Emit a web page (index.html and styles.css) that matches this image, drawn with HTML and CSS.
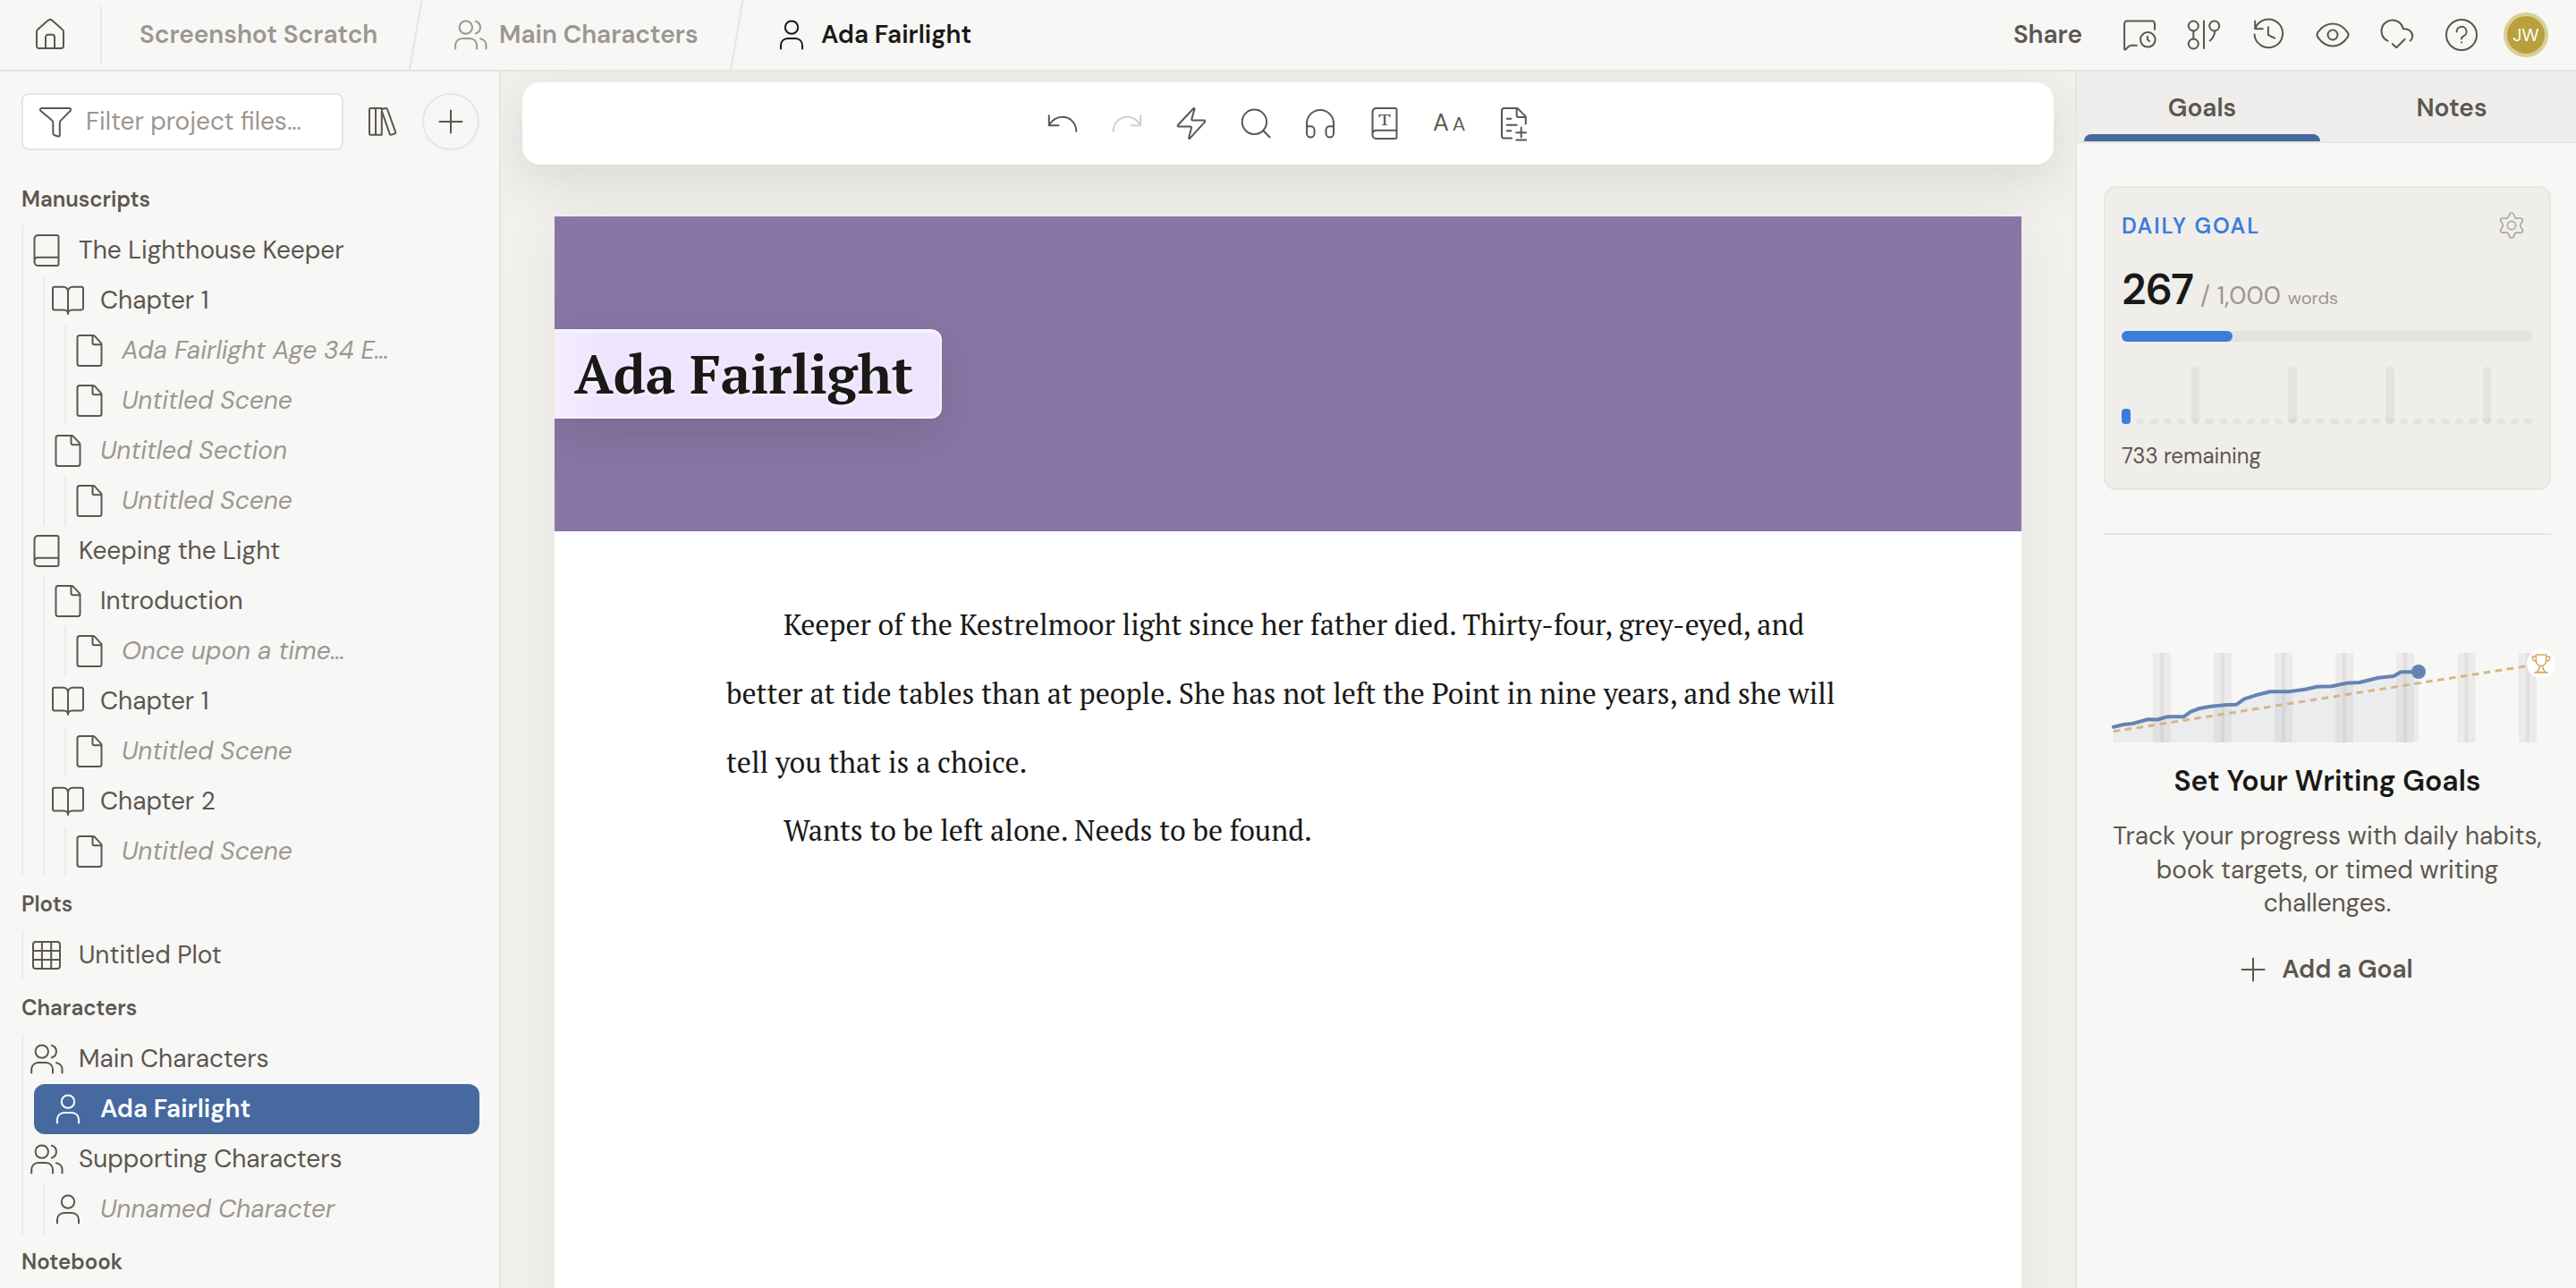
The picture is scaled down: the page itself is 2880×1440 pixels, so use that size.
FILE: index.html
```
<!DOCTYPE html>
<html lang="en">
<head>
  <meta charset="UTF-8">
  <title>Ada Fairlight - Screenshot Scratch</title>
  <link rel="stylesheet" href="styles.css">
</head>
<body>
  <!-- icon sprite, all on a 40x40 grid -->
  <svg class="sprite" aria-hidden="true">
    <symbol id="i-home" viewBox="0 0 40 40"><path d="M5 32.3V16.8a4 4 0 0 1 1.2-2.9L17.4 4.1a3.8 3.8 0 0 1 5.2 0l11.2 9.8a4 4 0 0 1 1.2 2.9v15.5a2.7 2.7 0 0 1-2.7 2.7H7.7A2.7 2.7 0 0 1 5 32.3zM15 35V22.5a2.7 2.7 0 0 1 2.7-2.7h4.6a2.7 2.7 0 0 1 2.7 2.7V35"/></symbol>
    <symbol id="i-users" viewBox="0 0 40 40"><circle cx="14.8" cy="11.6" r="7.2"/><path d="M3.2 35.5v-4a7.6 7.6 0 0 1 7.6-7.6h8.6a7.6 7.6 0 0 1 7.6 7.6v4M25.8 4.7a7.2 7.2 0 0 1 0 13.8M31 24.2a7.6 7.6 0 0 1 6.5 7.3v4"/></symbol>
    <symbol id="i-user" viewBox="0 0 40 40"><circle cx="20" cy="11.6" r="7.2"/><path d="M8 35.5v-4a7.6 7.6 0 0 1 7.6-7.6h8.8a7.6 7.6 0 0 1 7.6 7.6v4"/></symbol>
    <symbol id="i-filter" viewBox="0 0 40 40"><path d="M4.5 5h31a1.6 1.6 0 0 1 1.2 2.7L26 18.6a4 4 0 0 0-1.2 2.8v13.9a1.3 1.3 0 0 1-1.7 1.2l-4-1.3a2.6 2.6 0 0 1-1.8-2.5V21.4a4 4 0 0 0-1.2-2.8L3.3 7.7A1.6 1.6 0 0 1 4.5 5z"/></symbol>
    <symbol id="i-library" viewBox="0 0 40 40"><path d="M6.2 5h12.6v29.7H6.2A1.2 1.2 0 0 1 5 33.5V6.2A1.2 1.2 0 0 1 6.2 5zM12 5v29.7M18.8 6.3l4.3-1.3a1.5 1.5 0 0 1 1.9 1l9.2 25.6a1.5 1.5 0 0 1-1 1.9l-3.6 1.1a1.5 1.5 0 0 1-1.9-1L18.8 8"/></symbol>
    <symbol id="i-plus" viewBox="0 0 40 40"><path d="M20 7.5v25M7.5 20h25"/></symbol>
    <symbol id="i-book" viewBox="0 0 40 40"><path d="M33.5 27.7H10.3a3.8 3.8 0 0 0-3.8 3.8M6.5 33V7a4 4 0 0 1 4-4h21.3a1.7 1.7 0 0 1 1.7 1.7v30.6a1.7 1.7 0 0 1-1.7 1.7H10.5a4 4 0 0 1-4-4z"/></symbol>
    <symbol id="i-chapter" viewBox="0 0 40 40"><path d="M20 35V10a5.2 5.2 0 0 0-5.2-5.2H4.8A1.8 1.8 0 0 0 3 6.6v22a1.8 1.8 0 0 0 1.8 1.8H15.5a4.5 4.5 0 0 1 4.5 4.5 4.5 4.5 0 0 1 4.5-4.5h10.7a1.8 1.8 0 0 0 1.8-1.8v-22a1.8 1.8 0 0 0-1.8-1.8H25.2A5.2 5.2 0 0 0 20 10"/></symbol>
    <symbol id="i-doc" viewBox="0 0 40 40"><path d="M9 3h15.2a2 2 0 0 1 1.5.6l7.2 7.8a2 2 0 0 1 .6 1.4v21.7a2.5 2.5 0 0 1-2.5 2.5H9a2.5 2.5 0 0 1-2.5-2.5v-29A2.5 2.5 0 0 1 9 3zM23.5 3v8.2a2 2 0 0 0 2 2h8"/></symbol>
    <symbol id="i-grid" viewBox="0 0 40 40"><path d="M8 5h24a3 3 0 0 1 3 3v24a3 3 0 0 1-3 3H8a3 3 0 0 1-3-3V8a3 3 0 0 1 3-3zM14.9 5v30M25.2 5v30M5 15h30M5 25h30"/></symbol>
    <symbol id="i-comment" viewBox="0 0 40 40"><path d="M37 14V7.3a2.7 2.7 0 0 0-2.7-2.7H5.8a2.7 2.7 0 0 0-2.7 2.7v28.5c0 .8.7 1 1.3.5l3.2-3.1a5 5 0 0 1 3.5-1.5H17"/><circle cx="29.3" cy="25.3" r="8.3"/><path d="M29 21.8v3.3l2 1.9"/></symbol>
    <symbol id="i-branch" viewBox="0 0 40 40"><circle cx="8.3" cy="10" r="5.5"/><circle cx="8.3" cy="30" r="5.5"/><circle cx="31.7" cy="10" r="5.5"/><path d="M8.3 15.5v9M20 4.5v30.5M32.2 15.5c-.2 5-2.2 8.3-5.5 11"/></symbol>
    <symbol id="i-history" viewBox="0 0 40 40"><path d="M5.2 4.5v8.8h8.6M5.4 13A15.8 15.8 0 1 1 4.5 19.5M19.9 11.2v9l7.2 3.4"/></symbol>
    <symbol id="i-eye" viewBox="0 0 40 40"><circle cx="20" cy="20" r="5.5"/><path d="M20 7.5c7.2 0 13 4.6 16.6 9.7a4.6 4.6 0 0 1 0 5.4C33 27.8 27.2 32.5 20 32.5S7 27.8 3.4 22.6a4.6 4.6 0 0 1 0-5.4C7 12.1 12.8 7.5 20 7.5z"/></symbol>
    <symbol id="i-cloud" viewBox="0 0 40 40"><path d="M9.5 26.7A12.2 12.2 0 1 1 26.7 13.2c6-.6 10.6 3.5 10.6 8.3a7.3 7.3 0 0 1-2.6 5M14.7 30l4.6 4.3 9.3-9.6"/></symbol>
    <symbol id="i-help" viewBox="0 0 40 40"><circle cx="20" cy="20" r="17"/><path d="M14.6 16.4a5.5 5.5 0 1 1 7.5 5.1A3.3 3.3 0 0 0 20 24.5M20 28.3v.1"/></symbol>
    <symbol id="i-undo" viewBox="0 0 40 40"><path d="M4.8 11.2V22.2h10.7M4.8 22.2C8 16.5 13.4 12.7 19.8 12.7c8.8 0 15.5 7 15.5 16"/></symbol>
    <symbol id="i-redo" viewBox="0 0 40 40"><path d="M35.2 11.2V22.2H24.5M35.2 22.2C32 16.5 26.6 12.7 20.2 12.7c-8.8 0-15.5 7-15.5 16"/></symbol>
    <symbol id="i-bolt" viewBox="0 0 40 40"><path d="M22.3 3.3 5 21.7a1 1 0 0 0 .7 1.7H18.8a1.2 1.2 0 0 1 1.2 1.5l-2.9 11a.7.7 0 0 0 1.2.7L35 18.3a1 1 0 0 0-.7-1.7H21.5a1.2 1.2 0 0 1-1.2-1.5L23.5 4a.7.7 0 0 0-1.2-.7z"/></symbol>
    <symbol id="i-search" viewBox="0 0 40 40"><circle cx="18.4" cy="18.3" r="13.7"/><path d="M28.3 28l7.3 7.5"/></symbol>
    <symbol id="i-audio" viewBox="0 0 40 40"><path d="M5 31V20a15 15 0 0 1 30 0v11M5 23.2h4.5a4 4 0 0 1 4 4v4a4.25 4.25 0 0 1-8.5 0zM35 23.2h-4.5a4 4 0 0 0-4 4v4a4.25 4.25 0 0 0 8.5 0z"/></symbol>
    <symbol id="i-file-diff" viewBox="0 0 40 40"><path d="M18 36.5H9.5A2.5 2.5 0 0 1 7 34V5.5A2.5 2.5 0 0 1 9.5 3h14.2a2 2 0 0 1 1.5.6l8 8a2 2 0 0 1 .6 1.4v7.5M23.7 3v8a2 2 0 0 0 2 2h8.1M12.7 14.8h4.6M12.7 21.7h11M12.7 28.3h4.6M28.7 24.5v11M23.2 30.3h11M23.2 38.5h11"/></symbol>
    <symbol id="i-gear" viewBox="-20 -20 40 40"><circle r="5.8"/><path d="M-3.1-15a3.2 3.2 0 0 1 6.2 0L4-13A4.2 4.2 0 0 0 9.3-10L11.4-10.2A3.2 3.2 0 0 1 14.5-4.8L13.3-3A4.2 4.2 0 0 0 13.3 3L14.5 4.8A3.2 3.2 0 0 1 11.4 10.2L9.3 10A4.2 4.2 0 0 0 4 13L3.1 15A3.2 3.2 0 0 1-3.1 15L-4 13A4.2 4.2 0 0 0-9.3 10L-11.4 10.2A3.2 3.2 0 0 1-14.5 4.8L-13.3 3A4.2 4.2 0 0 0-13.3-3L-14.5-4.8A3.2 3.2 0 0 1-11.4-10.2L-9.3-10A4.2 4.2 0 0 0-4-13z"/></symbol>
  </svg>

  <header class="topbar">
    <a class="home"><svg class="icon"><use href="#i-home"/></svg></a>
    <nav class="crumbs">
      <a class="crumb crumb-project">Screenshot Scratch</a>
      <svg class="slash" viewBox="0 0 16 78"><path d="M14.5 0L1 78"/></svg>
      <a class="crumb crumb-folder"><svg class="icon"><use href="#i-users"/></svg>Main Characters</a>
      <svg class="slash" viewBox="0 0 16 78"><path d="M14.5 0L1 78"/></svg>
      <a class="crumb crumb-current"><svg class="icon"><use href="#i-user"/></svg>Ada Fairlight</a>
    </nav>
    <div class="actions">
      <span class="share">Share</span>
      <svg class="icon"><use href="#i-comment"/></svg>
      <svg class="icon"><use href="#i-branch"/></svg>
      <svg class="icon"><use href="#i-history"/></svg>
      <svg class="icon"><use href="#i-eye"/></svg>
      <svg class="icon"><use href="#i-cloud"/></svg>
      <svg class="icon"><use href="#i-help"/></svg>
      <span class="avatar">JW</span>
    </div>
  </header>

  <div class="workspace">
    <aside class="sidebar">
      <div class="filter-row">
        <div class="filter"><svg class="icon"><use href="#i-filter"/></svg>Filter project files…</div>
        <svg class="icon"><use href="#i-library"/></svg>
        <div class="add"><svg class="icon"><use href="#i-plus"/></svg></div>
      </div>

      <h2>Manuscripts</h2>
      <ul class="tree">
        <li><div class="row"><svg class="icon"><use href="#i-book"/></svg>The Lighthouse Keeper</div>
          <ul>
            <li><div class="row"><svg class="icon"><use href="#i-chapter"/></svg>Chapter 1</div>
              <ul>
                <li><div class="row untitled"><svg class="icon"><use href="#i-doc"/></svg>Ada Fairlight Age 34 E…</div></li>
                <li><div class="row untitled"><svg class="icon"><use href="#i-doc"/></svg>Untitled Scene</div></li>
              </ul>
            </li>
            <li><div class="row untitled"><svg class="icon"><use href="#i-doc"/></svg>Untitled Section</div>
              <ul>
                <li><div class="row untitled"><svg class="icon"><use href="#i-doc"/></svg>Untitled Scene</div></li>
              </ul>
            </li>
          </ul>
        </li>
        <li><div class="row"><svg class="icon"><use href="#i-book"/></svg>Keeping the Light</div>
          <ul>
            <li><div class="row"><svg class="icon"><use href="#i-doc"/></svg>Introduction</div>
              <ul>
                <li><div class="row untitled"><svg class="icon"><use href="#i-doc"/></svg>Once upon a time…</div></li>
              </ul>
            </li>
            <li><div class="row"><svg class="icon"><use href="#i-chapter"/></svg>Chapter 1</div>
              <ul>
                <li><div class="row untitled"><svg class="icon"><use href="#i-doc"/></svg>Untitled Scene</div></li>
              </ul>
            </li>
            <li><div class="row"><svg class="icon"><use href="#i-chapter"/></svg>Chapter 2</div>
              <ul>
                <li><div class="row untitled"><svg class="icon"><use href="#i-doc"/></svg>Untitled Scene</div></li>
              </ul>
            </li>
          </ul>
        </li>
      </ul>

      <h2>Plots</h2>
      <ul class="tree">
        <li><div class="row"><svg class="icon"><use href="#i-grid"/></svg>Untitled Plot</div></li>
      </ul>

      <h2>Characters</h2>
      <ul class="tree">
        <li><div class="row"><svg class="icon"><use href="#i-users"/></svg>Main Characters</div>
          <ul class="no-guide">
            <li><div class="row selected"><svg class="icon"><use href="#i-user"/></svg>Ada Fairlight</div></li>
          </ul>
        </li>
        <li><div class="row"><svg class="icon"><use href="#i-users"/></svg>Supporting Characters</div>
          <ul>
            <li><div class="row untitled"><svg class="icon"><use href="#i-user"/></svg>Unnamed Character</div></li>
          </ul>
        </li>
      </ul>

      <h2>Notebook</h2>
    </aside>

    <main class="editor">
      <div class="toolbar">
        <svg class="icon"><use href="#i-undo"/></svg>
        <svg class="icon disabled"><use href="#i-redo"/></svg>
        <svg class="icon"><use href="#i-bolt"/></svg>
        <svg class="icon"><use href="#i-search"/></svg>
        <svg class="icon"><use href="#i-audio"/></svg>
        <svg class="icon" viewBox="0 0 40 40"><use href="#i-book"/><text class="glyph glyph-serif" x="13" y="21.7" textLength="14" lengthAdjust="spacingAndGlyphs">T</text></svg>
        <svg class="icon" viewBox="0 0 40 40"><text class="glyph glyph-large" x="11" y="27.7">A</text><text class="glyph glyph-small" x="31" y="27.7">A</text></svg>
        <svg class="icon"><use href="#i-file-diff"/></svg>
      </div>
      <article class="page">
        <div class="banner"><h1>Ada Fairlight</h1></div>
        <div class="prose">
          <p>Keeper of the Kestrelmoor light since her father died. Thirty-four, grey-eyed, and better at tide tables than at people. She has not left the Point in nine years, and she will tell you that is a choice.</p>
          <p>Wants to be left alone. Needs to be found.</p>
        </div>
      </article>
    </main>

    <aside class="panel">
      <div class="tabs">
        <a class="tab active">Goals</a>
        <a class="tab">Notes</a>
      </div>
      <section class="goal-card">
        <div class="goal-head"><span>DAILY GOAL</span><svg class="icon"><use href="#i-gear"/></svg></div>
        <div class="goal-count"><b>267</b><span>/ 1,000</span><small>words</small></div>
        <div class="progress"><div class="progress-fill" style="width: 26.9%"></div></div>
        <div class="days">
          <i class="today"></i><i></i><i></i><i></i><i></i><i class="week"></i><i></i><i></i><i></i><i></i>
          <i></i><i></i><i class="week"></i><i></i><i></i><i></i><i></i><i></i><i></i><i class="week"></i>
          <i></i><i></i><i></i><i></i><i></i><i></i><i class="week"></i><i></i><i></i><i></i>
        </div>
        <div class="remaining">733 remaining</div>
      </section>
      <hr>
      <section class="goal-intro">
        <svg class="chart" viewBox="0 0 508 116">
          <path class="weeks" d="M65 10v100M133 10v100M201 10v100M269 10v100M337 10v100M405.5 10v100M474 10v100"/>
          <path class="week-lines" d="M65 10v100M133 10v100M201 10v100M269 10v100M337 10v100M405.5 10v100M474 10v100"/>
          <path class="area" d="M10.8 92.7L22.3 90 32.3 89 49.4 84.3 59.8 84.5 70.9 81.3H89.4L97.3 75.7 107.3 72 119.8 69.7 137.6 68 148.4 67.7 157.3 61.3 169.8 57.3 185.9 53.3H206.6L225.1 50.7 238.4 47.7 254.8 47.3 271.6 43.7 285.9 43 307.3 37.7 324 36 332.3 31.3H352V110H10.8z"/>
          <path class="target" d="M10.8 97.8L474 24.5"/>
          <path class="line" d="M11 92.7L22.3 90 32.3 89 49.4 84.3 59.8 84.5 70.9 81.3H89.4L97.3 75.7 107.3 72 119.8 69.7 137.6 68 148.4 67.7 157.3 61.3 169.8 57.3 185.9 53.3H206.6L225.1 50.7 238.4 47.7 254.8 47.3 271.6 43.7 285.9 43 307.3 37.7 324 36 332.3 31.3H352"/>
          <circle class="now" cx="352" cy="31" r="8"/>
          <circle class="medal" cx="489" cy="22" r="16"/>
          <path class="trophy" d="M483.3 12h11.4v6c0 4-2.5 6.5-5.7 6.5s-5.7-2.5-5.7-6.5zM483.3 14h-3.8c-.6 3.5 1 5.5 4 5.5M494.7 14h3.8c.6 3.5-1 5.5-4 5.5M487.5 24.5c0 3-1.5 5-3 7h9c-1.5-2-3-4-3-7M481 32h16"/>
        </svg>
        <h3>Set Your Writing Goals</h3>
        <p>Track your progress with daily habits, book targets, or timed writing challenges.</p>
        <a class="add-goal"><svg class="icon"><use href="#i-plus"/></svg>Add a Goal</a>
      </section>
    </aside>
  </div>
</body>
</html>
```
FILE: styles.css
```
:root {
  --surface: #f7f7f5;
  --border:  #e8e4e2;
  --guide:   #ecebe9;
  --text:    #5c5650;
  --muted:   #9d9690;
  --ink:     #1a1917;
  --accent:  #4669a0;
  --goal:    #3c7ddb;
  --track:   #e4e3df;
}

* {
  box-sizing: border-box;
}

html, body {
  height: 100%;
  margin: 0;
  overflow: hidden;
}

body {
  display: flex;
  flex-direction: column;
  background: var(--surface);
  color: var(--text);
  font: 400 28px/1 "DM Sans", "Open Sans", sans-serif;
}

h1, h2, h3, p, ul {
  margin: 0;
  padding: 0;
}

.sprite {
  display: none;
}

.icon {
  width: 40px;
  height: 40px;
  flex: none;
  fill: none;
  stroke: currentColor;
  stroke-width: 2;
  stroke-linecap: round;
  stroke-linejoin: round;
}

/* Top bar */
.topbar {
  display: flex;
  align-items: center;
  height: 80px;
  flex: none;
  border-bottom: 2px solid var(--border);
  font-weight: 600;
}

.home {
  display: flex;
  align-items: center;
  width: 114px;
  height: 64px;
  padding-left: 36px;
  border-right: 2px solid var(--border);
}

.crumbs {
  display: flex;
  align-items: center;
  height: 78px;
  color: var(--muted);
}

.crumb {
  display: flex;
  align-items: center;
  gap: 12px;
}

.crumb-project {
  width: 343px;
  padding-left: 42px;
}

.crumb-folder {
  width: 343px;
  padding-left: 33px;
}

.crumb-current {
  gap: 13px;
  padding-left: 33px;
  color: var(--ink);
}

.slash {
  width: 16px;
  height: 78px;
  fill: none;
  stroke: var(--border);
  stroke-width: 2;
}

.actions {
  display: flex;
  align-items: center;
  gap: 32px;
  margin-left: auto;
  padding-right: 31px;
}

.share {
  margin-right: 12px;
}

.avatar {
  width: 50px;
  height: 50px;
  margin-left: -5px;
  border: 4px solid #d9ce98;
  border-radius: 50%;
  background: #b8a13c;
  color: #fff;
  font-size: 20px;
  font-weight: 400;
  line-height: 42px;
  text-align: center;
}

.workspace {
  display: flex;
  flex: 1;
  min-height: 0;
}

/* Sidebar */
.sidebar {
  width: 560px;
  flex: none;
  padding: 24px 22px 0 24px;
  border-right: 2px solid var(--border);
  overflow: hidden;
}

.filter-row {
  display: flex;
  align-items: center;
  margin-bottom: 24px;
}

.filter {
  display: flex;
  align-items: center;
  gap: 14px;
  width: 360px;
  height: 64px;
  margin-right: 24px;
  padding-left: 16px;
  border: 2px solid var(--border);
  border-radius: 8px;
  background: #fff;
  color: var(--muted);
}

.filter .icon {
  color: var(--text);
}

.add {
  display: flex;
  align-items: center;
  justify-content: center;
  width: 64px;
  height: 64px;
  margin-left: 24px;
  border: 2px solid var(--border);
  border-radius: 50%;
}

.sidebar h2 {
  height: 60px;
  padding-top: 1px;
  font-size: 24px;
  font-weight: 600;
  line-height: 60px;
}

.tree, .tree ul {
  list-style: none;
  border-left: 2px solid var(--guide);
}

.tree ul {
  margin-left: 22px;
}

.tree .no-guide {
  border-color: transparent;
}

.row {
  display: flex;
  align-items: center;
  gap: 16px;
  height: 56px;
  padding-left: 6px;
  white-space: nowrap;
}

.untitled {
  color: var(--muted);
  font-style: italic;
}

.untitled .icon {
  color: var(--text);
}

.selected {
  margin-left: -12px;
  padding-left: 18px;
  border-radius: 12px;
  background: var(--accent);
  color: #fff;
  font-weight: 600;
}

/* Editor */
.editor {
  width: 1760px;
  flex: none;
  padding: 12px 24px 0;
  background: #f2f1ed;
  overflow: hidden;
}

.toolbar {
  position: relative;
  display: flex;
  align-items: center;
  justify-content: center;
  gap: 32px;
  height: 92px;
  border-radius: 20px;
  background: #fff;
  box-shadow: 0 16px 60px rgba(60, 60, 50, 0.14);
}

.disabled {
  color: #d2cfcd;
}

.glyph {
  fill: currentColor;
  stroke: none;
  text-anchor: middle;
  font-weight: 400;
}

.glyph-serif {
  font-family: "PT Serif", "Liberation Serif", serif;
  font-size: 18px;
  text-anchor: start;
}

.glyph-large {
  font-size: 27px;
}

.glyph-small {
  font-size: 22px;
}

.page {
  position: relative;
  width: 1640px;
  height: 1300px;
  margin: 58px auto 0;
  background: #fff;
  box-shadow: 0 16px 60px rgba(60, 60, 50, 0.08);
  color: var(--ink);
  font-family: "PT Serif", "Liberation Serif", serif;
}

.banner {
  display: flex;
  align-items: center;
  height: 352px;
  background: #8976a6;
  overflow: hidden;
}

.banner h1 {
  width: 433px;
  height: 100px;
  padding-left: 22px;
  border: solid #f6f2fe;
  border-width: 4px 2px 2px 0;
  border-radius: 0 12px 12px 0;
  background: linear-gradient(90deg, #f3edff, #ede5fd 60px);
  box-shadow: 0 16px 60px rgba(60, 50, 60, 0.2);
  text-shadow: 0 2px 4px rgba(255, 255, 255, 0.8);
  font-size: 60px;
  font-weight: 700;
  line-height: 92px;
  white-space: nowrap;
}

.prose {
  padding: 66px 190px 0 192px;
  font-size: 32px;
  line-height: 76.8px;
}

.prose p {
  text-indent: 64px;
}

/* Right panel */
.panel {
  flex: 1;
  border-left: 2px solid var(--border);
}

.tabs {
  display: flex;
  height: 80px;
  border-bottom: 2px solid var(--border);
  background: #eeedeb;
  font-weight: 600;
}

.tab {
  display: flex;
  flex-direction: column;
  flex: 1;
  align-items: center;
  padding: 27px 8px 0;
}

.active::after {
  content: "";
  width: 264px;
  height: 8px;
  margin-top: auto;
  border-radius: 8px 8px 0 0;
  background: var(--accent);
}

.goal-card {
  width: 500px;
  height: 340px;
  margin: 48px 0 0 30px;
  padding: 22px 18px 0;
  border: 2px solid #e8e6e3;
  border-radius: 14px;
  background: #f0eeeb;
}

.goal-head {
  display: flex;
  align-items: center;
  justify-content: space-between;
  height: 40px;
  padding-right: 8px;
  color: var(--goal);
  font-size: 24px;
  font-weight: 600;
  letter-spacing: 1.9px;
}

.goal-head .icon {
  width: 32px;
  height: 32px;
  color: #aaa5a1;
}

.goal-head span {
  padding-top: 1px;
}

.goal-count {
  display: flex;
  align-items: baseline;
  gap: 8px;
  height: 51px;
  margin-top: 28px;
  color: var(--muted);
}

.goal-count b {
  color: var(--ink);
  font-size: 48px;
  font-weight: 600;
  letter-spacing: -1px;
}

.goal-count small {
  font-size: 20px;
}

.progress {
  height: 12px;
  margin-top: 19px;
  border-radius: 6px;
  background: var(--track);
}

.progress-fill {
  height: 12px;
  border-radius: 6px;
  background: var(--goal);
}

.days {
  display: flex;
  align-items: flex-end;
  gap: 6px;
  height: 64px;
  margin-top: 28px;
}

.days i {
  flex: 1;
  height: 6px;
  border-radius: 4px;
  background: var(--track);
}

.days .week {
  height: 64px;
  border-radius: 5px;
  background: linear-gradient(0deg, #dddbd7 6px, var(--track) 6px);
}

.days .today {
  height: 17px;
  background: var(--goal);
}

.remaining {
  margin-top: 24px;
  font-size: 24px;
}

.panel hr {
  width: 500px;
  height: 2px;
  margin: 48px 0 0 30px;
  border: 0;
  background: var(--border);
}

.goal-intro {
  margin: 122px 28px 0 30px;
  width: 500px;
  text-align: center;
}

.chart {
  display: block;
  width: 508px;
  height: 116px;
  fill: none;
}

.weeks {
  stroke: #edebe9;
  stroke-width: 20;
}

.week-lines {
  stroke: #e2e0de;
  stroke-width: 4;
}

.area {
  fill: rgba(70, 105, 160, 0.07);
}

.target {
  stroke: #d8b583;
  stroke-width: 3;
  stroke-dasharray: 7.5 5.6;
}

.line {
  stroke: #6583b3;
  stroke-width: 4;
  stroke-linecap: round;
  stroke-linejoin: round;
}

.now {
  fill: #6583b3;
}

.medal {
  fill: #fff;
}

.trophy {
  stroke: #d9a862;
  stroke-width: 1.6;
}

.goal-intro h3 {
  margin-top: 19px;
  color: var(--ink);
  font-size: 32px;
  font-weight: 600;
  line-height: 36px;
}

.goal-intro p {
  margin-top: 25px;
  line-height: 37.5px;
}

.add-goal {
  display: flex;
  align-items: center;
  justify-content: center;
  gap: 12px;
  margin-top: 35px;
  padding-right: 7px;
  font-weight: 600;
}
```
